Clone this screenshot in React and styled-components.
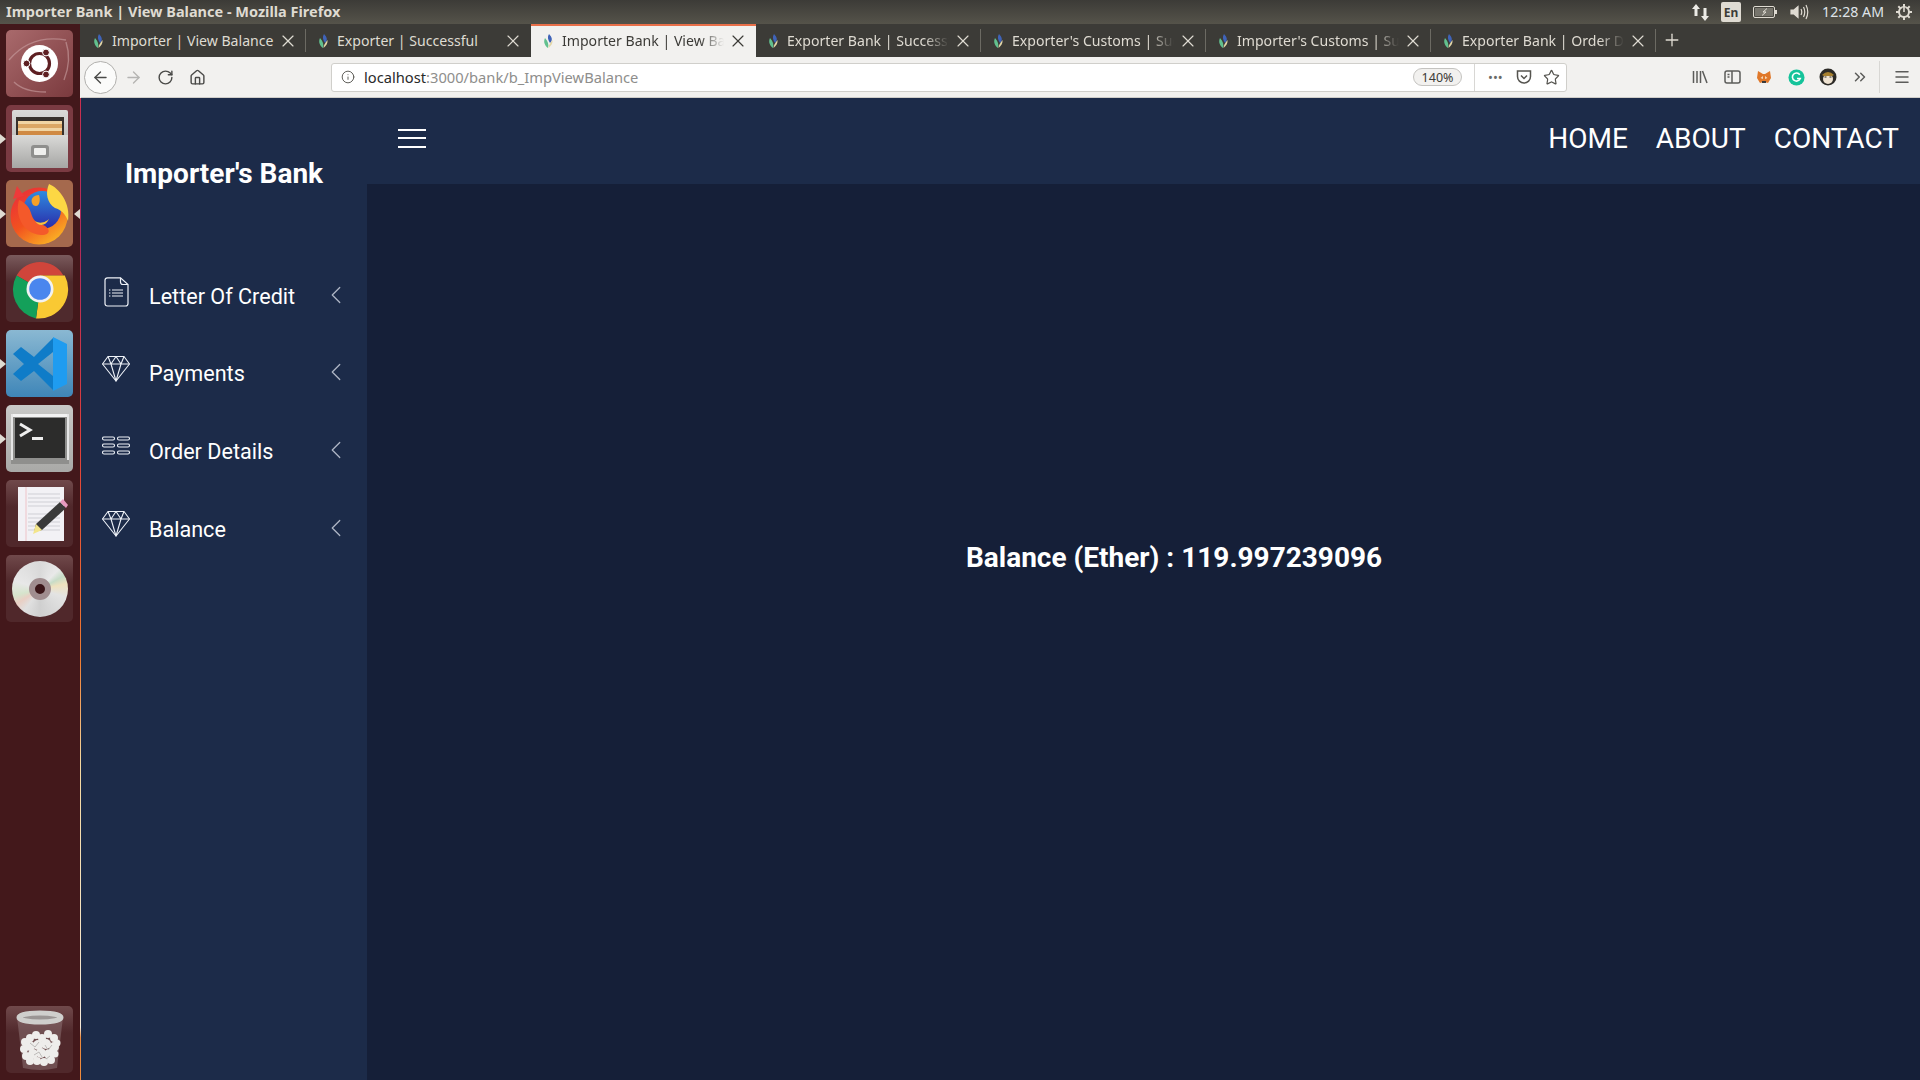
import styled, { createGlobalStyle } from "styled-components";
import { ArrowLeft, ArrowRight, RotateCw, Home, Info, X, Plus, Star, ChevronsRight, Menu, ChevronLeft } from "lucide-react";

const GlobalStyle = createGlobalStyle`
  html, body { margin: 0; padding: 0; height: 100%; overflow: hidden; }
  body { background: #151f38; font-family: "Roboto", "Liberation Sans", sans-serif; }
  #root { height: 100%; }
`;

const Screen = styled.div`
  width: 1920px;
  height: 1080px;
  display: flex;
  flex-direction: column;
  overflow: hidden;
`;

const TitleBar = styled.div`
  height: 24px;
  flex: none;
  display: flex;
  align-items: center;
  justify-content: space-between;
  padding: 0 8px 2px 6px;
  box-sizing: border-box;
  background: linear-gradient(#3c3b37, #55534a);
  color: #dfdbd2;
  font: 700 14.5px "Noto Sans", sans-serif;
`;

const Tray = styled.div`
  display: flex;
  align-items: center;
  gap: 12px;
  font-weight: 400;
  margin-bottom: -2px;
`;

const LangBadge = styled.span`
  width: 20px;
  height: 20px;
  background: #dfdbd2;
  color: #3c3b37;
  border-radius: 2px;
  font-size: 12px;
  font-weight: 700;
  display: flex;
  align-items: center;
  justify-content: center;
`;

const Clock = styled.span`
  font-size: 14.2px;
  color: #dfe3e8;
  margin-bottom: 2px;
`;

const Body = styled.div`
  flex: 1;
  display: flex;
  min-height: 0;
`;

const Launcher = styled.div`
  width: 80px;
  flex: none;
  box-sizing: border-box;
  padding: 6px 7px 7px 6px;
  display: flex;
  flex-direction: column;
  gap: 8px;
  background: #43181b;
`;

const Tile = styled.div`
  width: 67px;
  height: 67px;
  flex: none;
  border-radius: 5px;
  background: ${(p) => p.$bg};
  display: flex;
  align-items: center;
  justify-content: center;
  position: relative;
  ${(p) => p.$last && "margin-top: auto;"}
`;

const Pip = styled.span`
  position: absolute;
  top: 50%;
  margin-top: -5px;
  width: 0;
  height: 0;
  border-top: 5px solid transparent;
  border-bottom: 5px solid transparent;
  ${(p) => (p.$right
    ? "right: -7px; border-right: 6px solid #dfdbd2;"
    : "left: -6px; border-left: 6px solid #dfdbd2;")}
`;

const Edge = styled.div`
  width: 1px;
  flex: none;
  background: linear-gradient(
    #3c3b37 0, #3c3b37 33px, #f2f1ef 33px, #f2f1ef 74px,
    #c9304f 74px, #b02a5c 20%, #e0403a 40%, #ee7a30 60%,
    #f4d9a0 70%, #f4e9d8 95%, #ee8a3c 96%, #ee8a3c 100%
  );
`;

const Browser = styled.div`
  flex: 1;
  min-width: 0;
  display: flex;
  flex-direction: column;
`;

const TabStrip = styled.div`
  height: 33px;
  flex: none;
  display: flex;
  background: #3c3b37;
`;

const Tab = styled.div`
  width: 225px;
  flex: none;
  box-sizing: border-box;
  display: flex;
  align-items: center;
  padding: 0 8px 2px 10px;
  gap: 6px;
  font: 400 14.1px "Noto Sans", sans-serif;
  color: ${(p) => (p.$active ? "#3c3b37" : "#dfdbd2")};
  background: ${(p) => (p.$active ? "#f2f1ef" : "transparent")};
  border-top: 2px solid ${(p) => (p.$active ? "#e9704a" : "transparent")};
  position: relative;
  ${(p) => !p.$active && !p.$noSep && `
    &::after {
      content: "";
      position: absolute;
      right: 0;
      top: 3px;
      bottom: 5px;
      width: 1px;
      background: #6c6a63;
    }
  `}
`;

const TabText = styled.span`
  flex: 1;
  min-width: 0;
  white-space: nowrap;
  overflow: hidden;
  ${(p) => p.$fade && `
    -webkit-mask-image: linear-gradient(to right, #000 85%, transparent 100%);
    mask-image: linear-gradient(to right, #000 85%, transparent 100%);
  `}
`;

const TabClose = styled(X)`
  flex: none;
  margin-left: -2px;
`;

const NewTab = styled.div`
  display: flex;
  align-items: center;
  padding: 0 0 2px 6px;
  color: #dfdbd2;
`;

const Toolbar = styled.div`
  height: 41px;
  flex: none;
  box-sizing: border-box;
  display: flex;
  align-items: center;
  background: #f2f1ef;
  border-bottom: 1px solid #cfcdc9;
  padding: 0 4px 0 3px;
`;

const BackButton = styled.div`
  width: 33px;
  height: 33px;
  box-sizing: border-box;
  border: 1px solid #b1b0ad;
  border-radius: 50%;
  background: #fbfbfa;
  display: flex;
  align-items: center;
  justify-content: center;
  color: #4a4a48;
`;

const NavIcon = styled.div`
  width: 32px;
  display: flex;
  justify-content: center;
  color: ${(p) => (p.$dim ? "#b5b4b2" : "#4a4a48")};
`;

const UrlBar = styled.div`
  width: 1236px;
  height: 29px;
  box-sizing: border-box;
  margin-left: 118px;
  background: #fff;
  border: 1px solid #d0cfcb;
  border-radius: 3px;
  display: flex;
  align-items: center;
  padding: 0 6px 0 9px;
  font: 400 14.7px "Noto Sans", sans-serif;
  color: #8e8e8c;
`;

const UrlText = styled.div`
  flex: 1;
  margin-left: 9px;
  white-space: nowrap;
`;

const UrlHost = styled.span`
  color: #2a2a2a;
`;

const ZoomPill = styled.div`
  width: 49px;
  height: 18px;
  box-sizing: border-box;
  border: 1px solid #c4c3c0;
  border-radius: 9px;
  background: #f2f1ef;
  color: #3c3b37;
  font-size: 12.5px;
  display: flex;
  align-items: center;
  justify-content: center;
  margin-right: 12px;
`;

const UrlActions = styled.div`
  height: 27px;
  border-left: 1px solid #d8d7d4;
  display: flex;
  align-items: center;
  gap: 11px;
  padding-left: 13px;
  color: #55544f;
`;

const Dots = styled.span`
  width: 17px;
  font-size: 13px;
  line-height: 1;
  white-space: nowrap;
  color: #6a6a68;
`;

const ToolIcons = styled.div`
  flex: 1;
  display: flex;
  align-items: center;
  justify-content: flex-end;
  color: #5c5c5a;
`;

const ToolSlot = styled.div`
  width: 32px;
  display: flex;
  justify-content: center;
`;

const MenuSlot = styled(ToolSlot)`
  border-left: 1px solid #d8d7d4;
  height: 32px;
  align-items: center;
  width: 37px;
  box-sizing: border-box;
  margin-left: 3px;
  padding-left: 7px;
`;

const Page = styled.div`
  flex: 1;
  min-height: 0;
  display: flex;
  background: #151f38;
  color: #fff;
`;

const Sidebar = styled.aside`
  width: 286px;
  flex: none;
  background: #1c2b49;
`;

const Brand = styled.div`
  font-size: 28px;
  font-weight: 700;
  text-align: center;
  padding-top: 59px;
  line-height: 34px;
  height: 123px;
  box-sizing: border-box;
`;

const MenuList = styled.div`
  padding-top: 36px;
`;

const MenuRow = styled.div`
  height: 77.6px;
  display: flex;
  align-items: center;
  padding: 0 16px 0 21px;
  font-size: 21.6px;
`;

const MenuIcon = styled.div`
  width: 28px;
  height: 30px;
  margin-top: -7px;
  color: #eef2f8;
`;

const MenuLabel = styled.span`
  flex: 1;
  margin: 1px 0 0 19px;
`;

const MenuCaret = styled.div`
  color: #aeb6c5;
  margin-top: -2px;
  display: flex;
`;

const Content = styled.main`
  flex: 1;
  min-width: 0;
  display: flex;
  flex-direction: column;
`;

const TopNav = styled.header`
  height: 86px;
  flex: none;
  background: #1c2b49;
  display: flex;
  align-items: center;
  justify-content: space-between;
  padding: 0 21px 0 31px;
`;

const Burger = styled.div`
  width: 28px;
  height: 19px;
  margin-bottom: 6px;
  display: flex;
  flex-direction: column;
  justify-content: space-between;
`;

const BurgerBar = styled.span`
  height: 2px;
  background: #fff;
`;

const NavLinks = styled.nav`
  display: flex;
  gap: 28px;
  font-size: 28px;
  margin-bottom: 5px;
`;

const BalanceArea = styled.div`
  flex: 1;
  padding: 354px 0 0 61px;
  text-align: center;
  font-size: 28px;
  font-weight: 700;
  line-height: 40px;
`;

const DiscFace = styled.div`
  width: 56px;
  height: 56px;
  border-radius: 50%;
  background: conic-gradient(#d9d9d9, #e9e9e9 12%, #c7dcc7 17%, #efe2bf 22%, #e3e3e3 30%, #cfcfcf 50%, #e0e0e0 60%, #e9cfc4 66%, #d6e4cc 71%, #e8e8e8 80%, #d9d9d9);
  display: flex;
  align-items: center;
  justify-content: center;
`;

const DiscRing = styled.div`
  width: 22px;
  height: 22px;
  box-sizing: border-box;
  border: 6px solid #a08d8f;
  border-radius: 50%;
  background: #3a1518;
`;

const Favicon = () => (
  <svg width="15" height="16" viewBox="0 0 15 16">
    <path d="M8 1 C11 4 12 7 9 10 C7 7 6 4 8 1Z" fill="#3f63b8" />
    <path d="M4 5 C2 9 4 13 7 15 C8 12 7 8 4 5Z" fill="#62c08e" />
    <path d="M11.5 7 C12 10 10 13 7.5 15 C7.5 12.5 9 10 11.5 7Z" fill="#e4d7a8" />
  </svg>
);

const UbuntuLogo = () => (
  <svg width="67" height="67" viewBox="0 0 67 67" fill="none">
    <path d="M3 30 Q25 4 60 10 M8 52 Q18 62 40 62 M60 12 Q66 30 58 50" stroke="#c9a0a2" strokeWidth="1.4" opacity="0.6" />
    <circle cx="33.5" cy="33.5" r="18.5" fill="#fff" />
    <circle cx="33.5" cy="33.5" r="10" stroke="#5e1f22" strokeWidth="3.2" />
    <circle cx="40" cy="22.5" r="3.4" fill="#5e1f22" stroke="#fff" />
    <circle cx="20.5" cy="33.5" r="3.4" fill="#5e1f22" stroke="#fff" />
    <circle cx="40" cy="44.5" r="3.4" fill="#5e1f22" stroke="#fff" />
  </svg>
);

const FilesLogo = () => (
  <svg width="58" height="60" viewBox="0 0 58 60">
    <defs>
      <linearGradient id="cabinet" x1="0" y1="0" x2="0" y2="1">
        <stop offset="0" stopColor="#dadad8" />
        <stop offset="1" stopColor="#a6a6a4" />
      </linearGradient>
    </defs>
    <rect x="1" y="1" width="56" height="58" rx="2" fill="url(#cabinet)" />
    <rect x="5" y="8" width="48" height="20" fill="#37312c" />
    <rect x="7" y="12" width="44" height="3" fill="#f0d5a4" />
    <rect x="7" y="15" width="44" height="4" fill="#dba765" />
    <rect x="7" y="19" width="44" height="3" fill="#f0d5a4" />
    <rect x="7" y="22" width="44" height="4" fill="#d08a43" />
    <path d="M1 26 H57 V59 H1Z" fill="url(#cabinet)" />
    <rect x="20" y="36" width="18" height="13" rx="3" fill="#8f8f8d" />
    <rect x="23" y="39" width="12" height="7" rx="1" fill="#efefed" />
  </svg>
);

const FirefoxLogo = () => (
  <svg width="62" height="62" viewBox="0 0 62 62">
    <defs>
      <linearGradient id="ffBody" x1="0" y1="0" x2="0.7" y2="1">
        <stop offset="0" stopColor="#e8283e" />
        <stop offset="0.55" stopColor="#f2521f" />
        <stop offset="1" stopColor="#fab024" />
      </linearGradient>
      <linearGradient id="ffGlobe" x1="0.5" y1="0" x2="0.5" y2="1">
        <stop offset="0" stopColor="#2f8be0" />
        <stop offset="1" stopColor="#2a2aa8" />
      </linearGradient>
    </defs>
    <circle cx="30" cy="33" r="28.5" fill="url(#ffBody)" />
    <circle cx="33" cy="27" r="19" fill="url(#ffGlobe)" />
    <path d="M24 22 C30 26 32 18 30 12 C25 12 20 16 24 22Z" fill="#f6a028" />
    <path d="M22 30 C20 22 13 18 10 17 C6 30 12 50 32 52 C44 52 40 44 34 42 C26 40 24 36 22 30Z" fill="#f4592a" />
    <path d="M26 38 C32 42 38 38 40 36 C37 43 30 44 26 38Z" fill="#f9c23c" />
    <path d="M40 1 C50 5 62 20 59 38 C56 30 52 27 46 25 C38 20 36 10 40 1Z" fill="#fcd744" />
    <path d="M4 16 L8 3 L15 13Z" fill="#ee3a3a" />
  </svg>
);

const ChromeLogo = () => (
  <svg width="60" height="60" viewBox="0 0 60 60">
    <path d="M30 30 L6.6 16.5 A27 27 0 0 1 53.4 16.5 L30 16.5Z" fill="#d0453b" />
    <path d="M30 30 L30 16.5 H54.8 A29.5 29.5 0 0 1 26 59.5Z" fill="#f9c933" />
    <path d="M30 30 L26 59.5 A29.5 29.5 0 0 1 6.6 16.5Z" fill="#14a05a" />
    <circle cx="30" cy="30" r="13.5" fill="#f2f2f2" />
    <circle cx="30" cy="30" r="10.8" fill="#4a86ee" />
  </svg>
);

const VsCodeLogo = () => (
  <svg width="60" height="60" viewBox="0 0 60 60">
    <path d="M43 4 L24 23 L11 13 L3 20 L14 30 L3 40 L11 47 L24 37 L43 56 L43 42 L28 30 L43 18Z" fill="#0f7cc8" />
    <path d="M43 3 L57 10 V50 L43 57Z" fill="#1f9cf0" />
  </svg>
);

const TerminalLogo = () => (
  <svg width="60" height="52" viewBox="0 0 60 52">
    <rect x="1" y="1" width="58" height="50" fill="#8f8f8d" />
    <rect x="1" y="1" width="58" height="3" fill="#f2f2f2" />
    <rect x="1" y="1" width="2" height="46" fill="#e6e6e6" />
    <rect x="57" y="1" width="2" height="46" fill="#e6e6e6" />
    <rect x="5" y="5" width="50" height="40" fill="#2c2c2b" />
    <path d="M10 11 L20 17 L10 23" fill="none" stroke="#eee" strokeWidth="3" />
    <rect x="22" y="24" width="11" height="3" fill="#eee" />
  </svg>
);

const EditorLogo = () => (
  <svg width="56" height="56" viewBox="0 0 56 56">
    <rect x="6" y="1" width="46" height="54" fill="#f2f1f5" />
    <line x1="14" y1="1" x2="14" y2="55" stroke="#eec3c8" />
    {[8, 12, 16, 20, 28, 32, 36, 40, 44].map((y) => (
      <line key={y} x1="16" x2="48" y1={y} y2={y} stroke="#cfcfd5" strokeWidth="1" />
    ))}
    <path d="M30 44 L54 22 L48 16 L24 38 L22 46Z" fill="#3a3a3a" />
    <path d="M48 16 L54 22 L56 19 L51 13Z" fill="#e89ac0" />
    <path d="M24 38 L30 44 L21 48Z" fill="#f3e58c" />
  </svg>
);

const DiscLogo = () => (
  <DiscFace>
    <DiscRing />
  </DiscFace>
);

const paper = [
  [10, 33, 4], [15, 29, 4], [21, 26, 4], [27, 29, 4], [33, 25, 4], [39, 29, 4], [42, 34, 3.5],
  [9, 40, 4], [15, 37, 5], [23, 36, 5], [31, 35, 5], [39, 38, 5],
  [11, 47, 4], [18, 45, 5], [26, 44, 5], [34, 45, 5], [40, 45, 3.5],
  [15, 52, 4], [22, 52, 4], [29, 53, 4], [36, 51, 4],
];

const TrashLogo = () => (
  <svg width="50" height="62" viewBox="0 0 50 62">
    <path d="M2 8 L8 59 Q25 63 42 59 L48 8Z" fill="#a08a8b" fillOpacity="0.4" />
    {paper.map(([cx, cy, r]) => (
      <circle key={`${cx}-${cy}`} cx={cx} cy={cy} r={r} fill="#eeedeb" />
    ))}
    <path d="M15 34 L20 38 L24 33 M30 36 L33 41 L37 36 M19 46 L24 43 L27 48 M31 50 L35 47" fill="none" stroke="#bdbbb9" strokeWidth="1" />
    <ellipse cx="25" cy="8.5" rx="21" ry="4.5" fill="#9a9594" stroke="#cfcfcd" strokeWidth="5" />
  </svg>
);

const FileIcon = () => (
  <svg width="28" height="30" viewBox="0 0 28 30" fill="none" stroke="currentColor" strokeWidth="1.2">
    <path d="M5.5 .8 H18.5 L26 7.5 V26.5 Q26 29 23.5 29 H5.5 Q3 29 3 26.5 V3.3 Q3 .8 5.5 .8Z" />
    <path d="M18.5 .8 V5 Q18.5 7.5 21 7.5 H26" />
    <path d="M10 13 H21 M10 16 H21 M10 19 H21" />
    <path d="M7 13 H8.4 M7 16 H8.4 M7 19 H8.4" />
  </svg>
);

const DiamondIcon = () => (
  <svg width="28" height="30" viewBox="0 0 28 30" fill="none" stroke="currentColor" strokeWidth="1.1" strokeLinejoin="round">
    <path d="M6 1.5 H22 L27.5 9 L14 26 L.5 9Z" />
    <path d="M.5 9 H27.5 M6 1.5 L9 9 L14 26 L19 9 L22 1.5 M9 9 L14 1.5 L19 9" />
  </svg>
);

const ListIcon = () => (
  <svg width="28" height="30" viewBox="0 0 28 30" fill="none" stroke="currentColor" strokeWidth="1.1">
    <rect x=".5" y="5" width="12" height="3" rx="1.5" />
    <rect x="15.5" y="5" width="12" height="3" rx="1.5" />
    <rect x=".5" y="12" width="12" height="3" rx="1.5" />
    <rect x="15.5" y="12" width="12" height="3" rx="1.5" />
    <rect x=".5" y="19" width="12" height="3" rx="1.5" />
    <rect x="15.5" y="19" width="12" height="3" rx="1.5" />
  </svg>
);

const PocketIcon = () => (
  <svg width="16" height="16" viewBox="0 0 16 16" fill="none" stroke="currentColor" strokeWidth="1.5">
    <path d="M1.5 2 H14.5 V7.5 A6.5 6.5 0 0 1 1.5 7.5Z" />
    <path d="M5 6.5 L8 9.5 L11 6.5" />
  </svg>
);

const LibraryIcon = () => (
  <svg width="16" height="16" viewBox="0 0 16 16" fill="none" stroke="currentColor" strokeWidth="1.5">
    <path d="M1.5 2 V14 M5 2 V14 M8.5 2 V14 M10.5 2 L15 14" />
  </svg>
);

const SidebarIcon = () => (
  <svg width="17" height="16" viewBox="0 0 17 16" fill="none" stroke="currentColor" strokeWidth="1.5">
    <rect x="1" y="2" width="15" height="12" rx="2" />
    <path d="M8 2 V14 M3.5 5.5 H5.5 M3.5 8 H5.5" />
  </svg>
);

const MetaMaskIcon = () => (
  <svg width="16" height="16" viewBox="0 0 16 16">
    <path d="M2 2 L7 5 H9 L14 2 L15 9 L12 14 L9 13 H7 L4 14 L1 9Z" fill="#e0782a" />
    <path d="M6 12 H10 V14 H6Z" fill="#3a3a3a" />
    <path d="M7 7 L4.5 9 L7 10Z M9 7 L11.5 9 L9 10Z" fill="#f6d9b8" />
  </svg>
);

const GrammarlyIcon = () => (
  <svg width="17" height="17" viewBox="0 0 18 18">
    <circle cx="9" cy="9" r="8.5" fill="#15c39a" />
    <path d="M12.5 6 A4.3 4.3 0 1 0 13 10 H9.5" fill="none" stroke="#fff" strokeWidth="1.7" />
  </svg>
);

const AvatarIcon = () => (
  <svg width="18" height="18" viewBox="0 0 18 18">
    <circle cx="9" cy="9" r="8.5" fill="#2c2a26" />
    <ellipse cx="9" cy="11" rx="5" ry="5" fill="#efe3d2" />
    <path d="M3 7 Q9 1 15 7 L13 8 H5Z" fill="#a8812f" />
    <path d="M5.5 9 H7.5 M10.5 9 H12.5" stroke="#2c2a26" />
  </svg>
);

const BatteryIcon = () => (
  <svg width="25" height="14" viewBox="0 0 25 14" fill="none">
    <rect x=".5" y="1.5" width="21" height="11" rx="1.5" stroke="#dfdbd2" />
    <rect x="2" y="3" width="18" height="8" fill="#77756d" />
    <rect x="22" y="5" width="2" height="4" fill="#dfdbd2" />
    <path d="M14 3.5 L10 7 H13 L9 10.5" stroke="#dfdbd2" />
  </svg>
);

const SpeakerIcon = () => (
  <svg width="20" height="16" viewBox="0 0 20 16" fill="none" stroke="#dfdbd2" strokeWidth="1.2">
    <path d="M1 6 H4 L8 2.5 V13.5 L4 10 H1Z" fill="#dfdbd2" />
    <path d="M11 5 Q12.5 8 11 11 M13.5 3 Q16 8 13.5 13 M16 1 Q19.5 8 16 15" />
  </svg>
);

const NetworkIcon = () => (
  <svg width="17" height="17" viewBox="0 0 17 17" fill="#ecebe6">
    <path d="M4 0 L8 5 H5.5 V12 H2.5 V5 H0Z" />
    <path d="M13 17 L17 12 H14.5 V4 H11.5 V12 H9Z" />
  </svg>
);

const PowerCog = () => (
  <svg width="16" height="16" viewBox="0 0 16 16" fill="none" stroke="#dfdbd2">
    <circle cx="8" cy="8" r="5" strokeWidth="2" />
    <path d="M8 0 V3 M8 13 V16 M0 8 H3 M13 8 H16 M2.3 2.3 L4.4 4.4 M11.6 11.6 L13.7 13.7 M2.3 13.7 L4.4 11.6 M11.6 4.4 L13.7 2.3" strokeWidth="2" />
    <path d="M8 3.5 V8" stroke="#44433e" strokeWidth="3" />
    <path d="M8 3 V8" strokeWidth="1.6" />
  </svg>
);

const tabs = [
  "Importer | View Balance",
  "Exporter | Successful",
  "Importer Bank | View Balance",
  "Exporter Bank | Successful",
  "Exporter's Customs | Successful",
  "Importer's Customs | Successful",
  "Exporter Bank | Order Details",
];

const dock = [
  { bg: "linear-gradient(135deg, #a96a6c, #7b3a3e)", Logo: UbuntuLogo },
  { bg: "#7a3a42", Logo: FilesLogo, pip: true },
  { bg: "#a5694d", Logo: FirefoxLogo, pip: true, right: true },
  { bg: "linear-gradient(#7a5a5c, #4f2a2d 40%)", Logo: ChromeLogo },
  { bg: "linear-gradient(#8ab8d2, #3f86b8)", Logo: VsCodeLogo, pip: true },
  { bg: "linear-gradient(#c9c9c7, #a9a9a7)", Logo: TerminalLogo, pip: true },
  { bg: "linear-gradient(#70494b, #50282b 40%)", Logo: EditorLogo },
  { bg: "linear-gradient(#70494b, #50282b 40%)", Logo: DiscLogo },
];

const menu = [
  { label: "Letter Of Credit", Icon: FileIcon },
  { label: "Payments", Icon: DiamondIcon },
  { label: "Order Details", Icon: ListIcon },
  { label: "Balance", Icon: DiamondIcon },
];

const App = () => {
  return (
    <Screen>
      <GlobalStyle />
      <TitleBar>
        <span>Importer Bank | View Balance - Mozilla Firefox</span>
        <Tray>
          <NetworkIcon />
          <LangBadge>En</LangBadge>
          <BatteryIcon />
          <SpeakerIcon />
          <Clock>12:28 AM</Clock>
          <PowerCog />
        </Tray>
      </TitleBar>
      <Body>
        <Launcher>
          {dock.map(({ bg, Logo, pip, right }, i) => (
            <Tile key={i} $bg={bg}>
              <Logo />
              {pip && <Pip />}
              {right && <Pip $right />}
            </Tile>
          ))}
          <Tile $last $bg="linear-gradient(#70494b, #50282b 40%)">
            <TrashLogo />
          </Tile>
        </Launcher>
        <Edge />
        <Browser>
          <TabStrip>
            {tabs.map((t, i) => (
              <Tab key={t} $active={i === 2} $noSep={i === 1}>
                <Favicon />
                <TabText $fade={i >= 2}>{t}</TabText>
                <TabClose size={20} strokeWidth={1.4} />
              </Tab>
            ))}
            <NewTab>
              <Plus size={20} strokeWidth={1.6} />
            </NewTab>
          </TabStrip>
          <Toolbar>
            <BackButton>
              <ArrowLeft size={19} strokeWidth={1.7} />
            </BackButton>
            <NavIcon $dim>
              <ArrowRight size={19} strokeWidth={1.7} />
            </NavIcon>
            <NavIcon>
              <RotateCw size={17} strokeWidth={2} />
            </NavIcon>
            <NavIcon>
              <Home size={17} strokeWidth={2} />
            </NavIcon>
            <UrlBar>
              <Info size={14} strokeWidth={1.6} color="#55544f" />
              <UrlText>
                <UrlHost>localhost</UrlHost>:3000/bank/b_ImpViewBalance
              </UrlText>
              <ZoomPill>140%</ZoomPill>
              <UrlActions>
                <Dots>•••</Dots>
                <PocketIcon />
                <Star size={17} strokeWidth={1.7} />
              </UrlActions>
            </UrlBar>
            <ToolIcons>
              <ToolSlot><LibraryIcon /></ToolSlot>
              <ToolSlot><SidebarIcon /></ToolSlot>
              <ToolSlot><MetaMaskIcon /></ToolSlot>
              <ToolSlot><GrammarlyIcon /></ToolSlot>
              <ToolSlot><AvatarIcon /></ToolSlot>
              <ToolSlot><ChevronsRight size={18} strokeWidth={2} /></ToolSlot>
              <MenuSlot><Menu size={18} strokeWidth={2} /></MenuSlot>
            </ToolIcons>
          </Toolbar>
          <Page>
            <Sidebar>
              <Brand>Importer's Bank</Brand>
              <MenuList>
                {menu.map(({ label, Icon }) => (
                  <MenuRow key={label}>
                    <MenuIcon><Icon /></MenuIcon>
                    <MenuLabel>{label}</MenuLabel>
                    <MenuCaret><ChevronLeft size={30} strokeWidth={1} /></MenuCaret>
                  </MenuRow>
                ))}
              </MenuList>
            </Sidebar>
            <Content>
              <TopNav>
                <Burger>
                  <BurgerBar />
                  <BurgerBar />
                  <BurgerBar />
                </Burger>
                <NavLinks>
                  <span>HOME</span>
                  <span>ABOUT</span>
                  <span>CONTACT</span>
                </NavLinks>
              </TopNav>
              <BalanceArea>Balance (Ether) : 119.997239096</BalanceArea>
            </Content>
          </Page>
        </Browser>
      </Body>
    </Screen>
  );
};

export default App;
